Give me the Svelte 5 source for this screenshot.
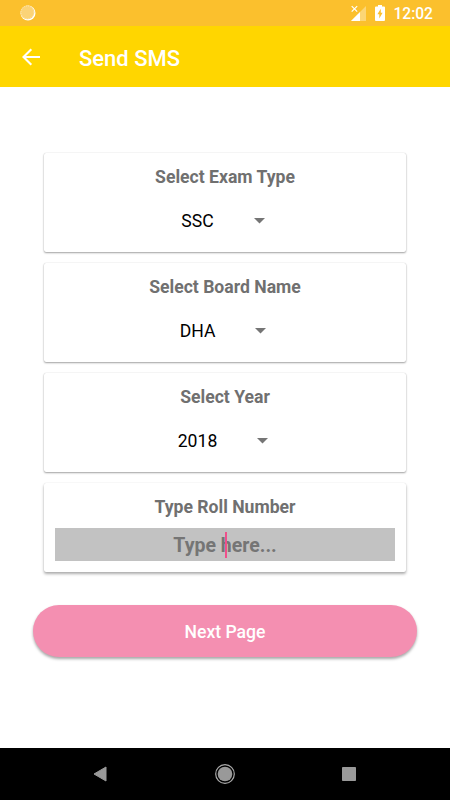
<script lang="ts">
    const selects = [
        { label: "Select Exam Type", value: "SSC" },
        { label: "Select Board Name", value: "DHA" },
        { label: "Select Year", value: "2018" },
    ];
</script>

<div class="screen">
    <div class="status">
        <svg class="sync" width="16" height="16" viewBox="0 0 16 16">
            <circle cx="8" cy="8" r="7.5" fill="#fff" />
            <circle cx="7.4" cy="7.4" r="6.9" fill="#fbd377" />
            <circle cx="7.4" cy="7.4" r="6.4" fill="none" stroke="#fde6b0" stroke-dasharray="1 1" />
        </svg>
        <svg class="signal" width="15" height="16" viewBox="0 0 15 16">
            <path d="M15 1V16H0Z" fill="#fff" opacity="0.35" />
            <path d="M0 0H9V7L7 9H0Z" fill="#fbc02d" />
            <path d="M9 7V16H0Z" fill="#fff" />
            <path d="M0.7 1.2L6.2 6.7M6.2 1.2L0.7 6.7" stroke="#fff" stroke-width="1.2" />
        </svg>
        <svg class="battery" width="10" height="16" viewBox="0 0 10 16">
            <path d="M3 0H7V1.6H9Q10 1.6 10 2.6V15Q10 16 9 16H1Q0 16 0 15V2.6Q0 1.6 1 1.6H3Z" fill="#fff" />
            <path d="M5.8 3.8L2.4 9.3H4.3V13.4L7.6 7.8H5.8Z" fill="#fbc02d" />
        </svg>
        <span class="time">12:02</span>
    </div>

    <header>
        <svg width="18" height="18" viewBox="0 0 18 18">
            <path d="M18 9H1.5M9.3 1.2L1.5 9L9.3 16.8" fill="none" stroke="#fff" stroke-width="2.1" />
        </svg>
        <h1>Send SMS</h1>
    </header>

    <main>
        {#each selects as select}
            <div class="card">
                <div class="label">{select.label}</div>
                <div class="spinner">
                    <span>{select.value}</span>
                    <svg width="11" height="6" viewBox="0 0 11 6">
                        <path d="M0 0H11L5.5 5.6Z" fill="#757575" />
                    </svg>
                </div>
            </div>
        {/each}

        <div class="card roll">
            <div class="label">Type Roll Number</div>
            <div class="field">
                <span>Type here...</span>
                <i class="cursor"></i>
            </div>
        </div>

        <button>Next Page</button>
    </main>

    <nav>
        <svg width="14" height="16" viewBox="0 0 14 16">
            <path d="M13 1V15L1 8Z" fill="#999" stroke="#999" stroke-linejoin="round" />
        </svg>
        <svg width="20" height="20" viewBox="0 0 20 20">
            <circle cx="10" cy="10" r="9.3" fill="none" stroke="#aaa" stroke-width="1.2" />
            <circle cx="10" cy="10" r="7.3" fill="#999" />
        </svg>
        <svg width="14" height="14" viewBox="0 0 14 14">
            <rect width="14" height="14" rx="0.8" fill="#999" />
        </svg>
    </nav>
</div>

<style>
    :global(body) {
        margin: 0;
        background-color: #fff;
        font-family: Roboto, sans-serif;
    }

    .screen {
        display: flex;
        flex-direction: column;
        height: 800px;
        overflow: hidden;
    }

    .status {
        display: flex;
        align-items: center;
        box-sizing: border-box;
        height: 26px;
        padding: 0 17px 0 20px;
        background-color: #fbc02d;
        color: #fff;
    }

    .signal {
        margin-left: auto;
    }

    .battery {
        margin: 0 8px 0 9px;
    }

    .time {
        font-size: 15.6px;
        font-weight: 500;
        line-height: 26px;
        padding-top: 2px;
    }

    header {
        display: flex;
        align-items: center;
        height: 61px;
        padding-left: 22px;
        background-color: #ffd600;
    }

    h1 {
        margin: 3px 0 0 39px;
        color: #fff;
        font-size: 22px;
        font-weight: 500;
    }

    main {
        flex: 1;
        padding: 66px 33px 0;
    }

    .card {
        box-sizing: border-box;
        height: 99px;
        margin: 0 11px 11px;
        padding: 12px 11px 0;
        border-radius: 2px;
        background-color: #fff;
        box-shadow: 0 1px 2px rgba(0, 0, 0, 0.36), 0 0 1px rgba(0, 0, 0, 0.2);
    }

    .label {
        color: #707070;
        font-size: 17.6px;
        font-weight: bold;
        line-height: 24px;
        text-align: center;
    }

    .spinner {
        display: flex;
        align-items: center;
        justify-content: center;
        gap: 40px;
        height: 24px;
        margin: 20px 4px 0 0;
        color: #000;
        font-size: 17.6px;
    }

    .roll {
        height: 89px;
        margin-bottom: 33px;
        box-shadow: 0 2px 3px rgba(0, 0, 0, 0.32), 0 0 1px rgba(0, 0, 0, 0.16);
    }

    .field {
        position: relative;
        height: 33px;
        margin-top: 9px;
        background-color: #c2c2c2;
        color: #757575;
        font-size: 19.5px;
        font-weight: bold;
        line-height: 36px;
        text-align: center;
    }

    .cursor {
        position: absolute;
        top: 4px;
        left: 50%;
        width: 2px;
        height: 26px;
        background-color: #f0508a;
    }

    button {
        display: block;
        width: 100%;
        height: 52px;
        padding: 2px 0 0;
        border: 0;
        border-radius: 26px;
        background-color: #f48fb1;
        box-shadow: 0 2px 3px rgba(0, 0, 0, 0.35);
        color: #fff;
        font-family: inherit;
        font-size: 17.6px;
        font-weight: 500;
    }

    nav {
        display: flex;
        align-items: center;
        justify-content: space-between;
        box-sizing: border-box;
        height: 52px;
        padding: 0 94px 1px 93px;
        background-color: #000;
    }
</style>
